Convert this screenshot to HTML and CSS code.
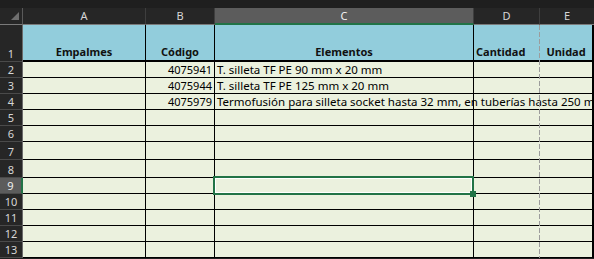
FILE: index.html
```html
<!DOCTYPE html>
<html lang="es">
<head>
  <meta charset="UTF-8" />
  <title>Empalmes</title>
  <link rel="stylesheet" href="styles.css">
</head>
<body>
  <div class="sheet">
    <!-- column headers -->
    <div class="corner"><span class="tri"></span></div>
    <div class="ch">A</div>
    <div class="ch">B</div>
    <div class="ch ch-sel">C</div>
    <div class="ch">D</div>
    <div class="ch ch-last">E</div>

    <!-- row 1 -->
    <div class="rh">1</div>
    <div class="cell head">Empalmes</div>
    <div class="cell head">Código</div>
    <div class="cell head">Elementos</div>
    <div class="cell head head-left nb">Cantidad</div>
    <div class="cell head last">Unidad</div>

    <div class="rh">2</div>
    <div class="cell"></div>
    <div class="cell num">4075941</div>
    <div class="cell"><span class="txt">T. silleta TF PE 90 mm x 20 mm</span></div>
    <div class="cell nb"></div>
    <div class="cell last"></div>

    <div class="rh">3</div>
    <div class="cell"></div>
    <div class="cell num">4075944</div>
    <div class="cell"><span class="txt">T. silleta TF PE 125 mm x 20 mm</span></div>
    <div class="cell nb"></div>
    <div class="cell last"></div>

    <div class="rh">4</div>
    <div class="cell"></div>
    <div class="cell num">4075979</div>
    <div class="cell"><span class="txt">Termofusión para silleta socket hasta 32 mm, en tuberías hasta 250 mm</span></div>
    <div class="cell nb"></div>
    <div class="cell last"></div>

    <div class="rh">5</div>
    <div class="cell"></div><div class="cell"></div><div class="cell"></div><div class="cell nb"></div><div class="cell last"></div>
    <div class="rh">6</div>
    <div class="cell"></div><div class="cell"></div><div class="cell"></div><div class="cell nb"></div><div class="cell last"></div>
    <div class="rh">7</div>
    <div class="cell"></div><div class="cell"></div><div class="cell"></div><div class="cell nb"></div><div class="cell last"></div>
    <div class="rh">8</div>
    <div class="cell"></div><div class="cell"></div><div class="cell"></div><div class="cell nb"></div><div class="cell last"></div>
    <div class="rh rh-sel">9</div>
    <div class="cell"></div><div class="cell"></div>
    <div class="cell active"><span class="selection"></span><span class="handle"></span></div>
    <div class="cell nb"></div><div class="cell last"></div>
    <div class="rh">10</div>
    <div class="cell"></div><div class="cell"></div><div class="cell"></div><div class="cell nb"></div><div class="cell last"></div>
    <div class="rh">11</div>
    <div class="cell"></div><div class="cell"></div><div class="cell"></div><div class="cell nb"></div><div class="cell last"></div>
    <div class="rh">12</div>
    <div class="cell"></div><div class="cell"></div><div class="cell"></div><div class="cell nb"></div><div class="cell last"></div>
    <div class="rh">13</div>
    <div class="cell"></div><div class="cell"></div><div class="cell"></div><div class="cell nb"></div><div class="cell last"></div>

    <div class="page-break"></div>
  </div>
</body>
</html>
```

FILE: styles.css
```css
:root {
  --dark: #1f1f1f;
  --head-bg: #262626;
  --head-text: #d6d6d6;
  --sel-bg: #5c5c5c;
  --green: #217346;
  --cell-bg: #ebf1de;
  --blue: #92cddc;
}

* {
  box-sizing: border-box;
  margin: 0;
  padding: 0;
}

html, body {
  width: 594px;
  height: 259px;
  overflow: hidden;
  background: var(--dark);
}

.sheet {
  position: relative;
  display: grid;
  grid-template-columns: 23px 123px 69px 259px 66px 54px;
  grid-template-rows: 25px 37px repeat(5, 16px) 18px 18px repeat(5, 16px);
  font-family: 'Noto Sans', 'Liberation Sans', sans-serif;
  font-size: 11px;
}

/* column headers */
.corner,
.ch {
  margin-top: 8px;
  background: var(--head-bg);
  border-bottom: 1px solid #7a7a7a;
  border-right: 1px solid #3e3e3e;
}

.corner {
  display: flex;
  align-items: flex-end;
  justify-content: flex-end;
  padding: 0 3px 4px 0;
  border-right-color: #5a5a5a;
}

.tri {
  width: 8px;
  height: 8px;
  background: #6e6e6e;
  clip-path: polygon(100% 0, 100% 100%, 0 100%);
}

.ch {
  display: flex;
  align-items: center;
  justify-content: center;
  color: var(--head-text);
  font-size: 11px;
  padding-bottom: 1px;
}

.ch-sel {
  background: var(--sel-bg);
  color: #f0f0f0;
  border-bottom: 2px solid var(--green);
}

.ch-last {
  border-right: none;
}

/* row headers */
.rh {
  display: flex;
  align-items: flex-end;
  justify-content: center;
  background: var(--head-bg);
  color: var(--head-text);
  font-size: 11px;
  line-height: 14px;
  border-right: 1px solid #6a6a6a;
  border-bottom: 1px solid #4a4a4a;
}

.rh-sel {
  background: var(--sel-bg);
  color: #f0f0f0;
  border-right: 2px solid var(--green);
}

/* cells */
.cell {
  position: relative;
  display: flex;
  align-items: flex-end;
  padding: 0 2px 0;
  line-height: 14px;
  background: var(--cell-bg);
  color: #000;
  white-space: nowrap;
  border-right: 1px solid #000;
  border-bottom: 1px solid #000;
}

.cell.nb {
  border-right: none;
}

.cell.last {
  border-right: 2px solid #000;
}

.head {
  background: var(--blue);
  color: #111;
  font-weight: bold;
  justify-content: center;
  border-bottom: 2px solid #000;
  padding-bottom: 1px;
}

.head-left {
  justify-content: flex-start;
}

.num {
  justify-content: flex-end;
}

.txt {
  position: relative;
  z-index: 1;
  font-size: 11.5px;
}

/* active cell */
.selection {
  position: absolute;
  left: -2px;
  top: -2px;
  width: 261px;
  height: 19px;
  border: 2px solid var(--green);
  box-shadow: inset 0 0 0 1px #fff;
  z-index: 2;
}

.handle {
  position: absolute;
  right: -3px;
  bottom: -4px;
  width: 6px;
  height: 6px;
  background: var(--green);
  z-index: 3;
}

.page-break {
  position: absolute;
  left: 539px;
  top: 25px;
  bottom: 0;
  width: 1px;
  background: repeating-linear-gradient(to bottom, #9c9c9c 0 5px, transparent 5px 7px);
  z-index: 2;
}
```
